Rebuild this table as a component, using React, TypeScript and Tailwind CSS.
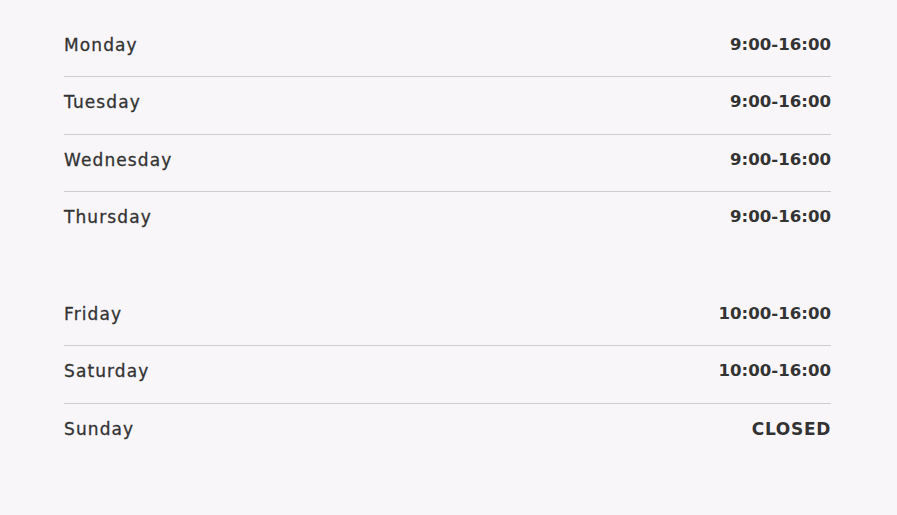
const groups = [
  [
    { day: "Monday", hours: "9:00-16:00" },
    { day: "Tuesday", hours: "9:00-16:00" },
    { day: "Wednesday", hours: "9:00-16:00" },
    { day: "Thursday", hours: "9:00-16:00" },
  ],
  [
    { day: "Friday", hours: "10:00-16:00" },
    { day: "Saturday", hours: "10:00-16:00" },
    { day: "Sunday", hours: "CLOSED" },
  ],
];

export default function App() {
  return (
    <div
      className="min-h-screen w-full bg-[#f8f6f9] px-16 pt-[19.5px] text-[#333333]"
      style={{ fontFamily: '"DejaVu Sans", sans-serif' }}
    >
      <div className="flex w-[767px] flex-col gap-[40px]">
        {groups.map((rows, gi) => (
          <ul key={gi} className="flex flex-col">
            {rows.map((r, i) => (
              <li
                key={r.day}
                className={`flex items-center justify-between pt-[13px] pb-[19.5px] leading-6 ${
                  i < rows.length - 1 ? "border-b border-[#cfcccf]" : ""
                }`}
              >
                <span className="text-[17px] tracking-[0.065em] [-webkit-text-stroke:0.3px_#333333]">
                  {r.day}
                </span>
                <span
                  className={
                    r.hours === "CLOSED"
                      ? "text-[17px] font-bold tracking-[0.04em]"
                      : "text-[16.6px] font-bold"
                  }
                >
                  {r.hours}
                </span>
              </li>
            ))}
          </ul>
        ))}
      </div>
    </div>
  );
}
